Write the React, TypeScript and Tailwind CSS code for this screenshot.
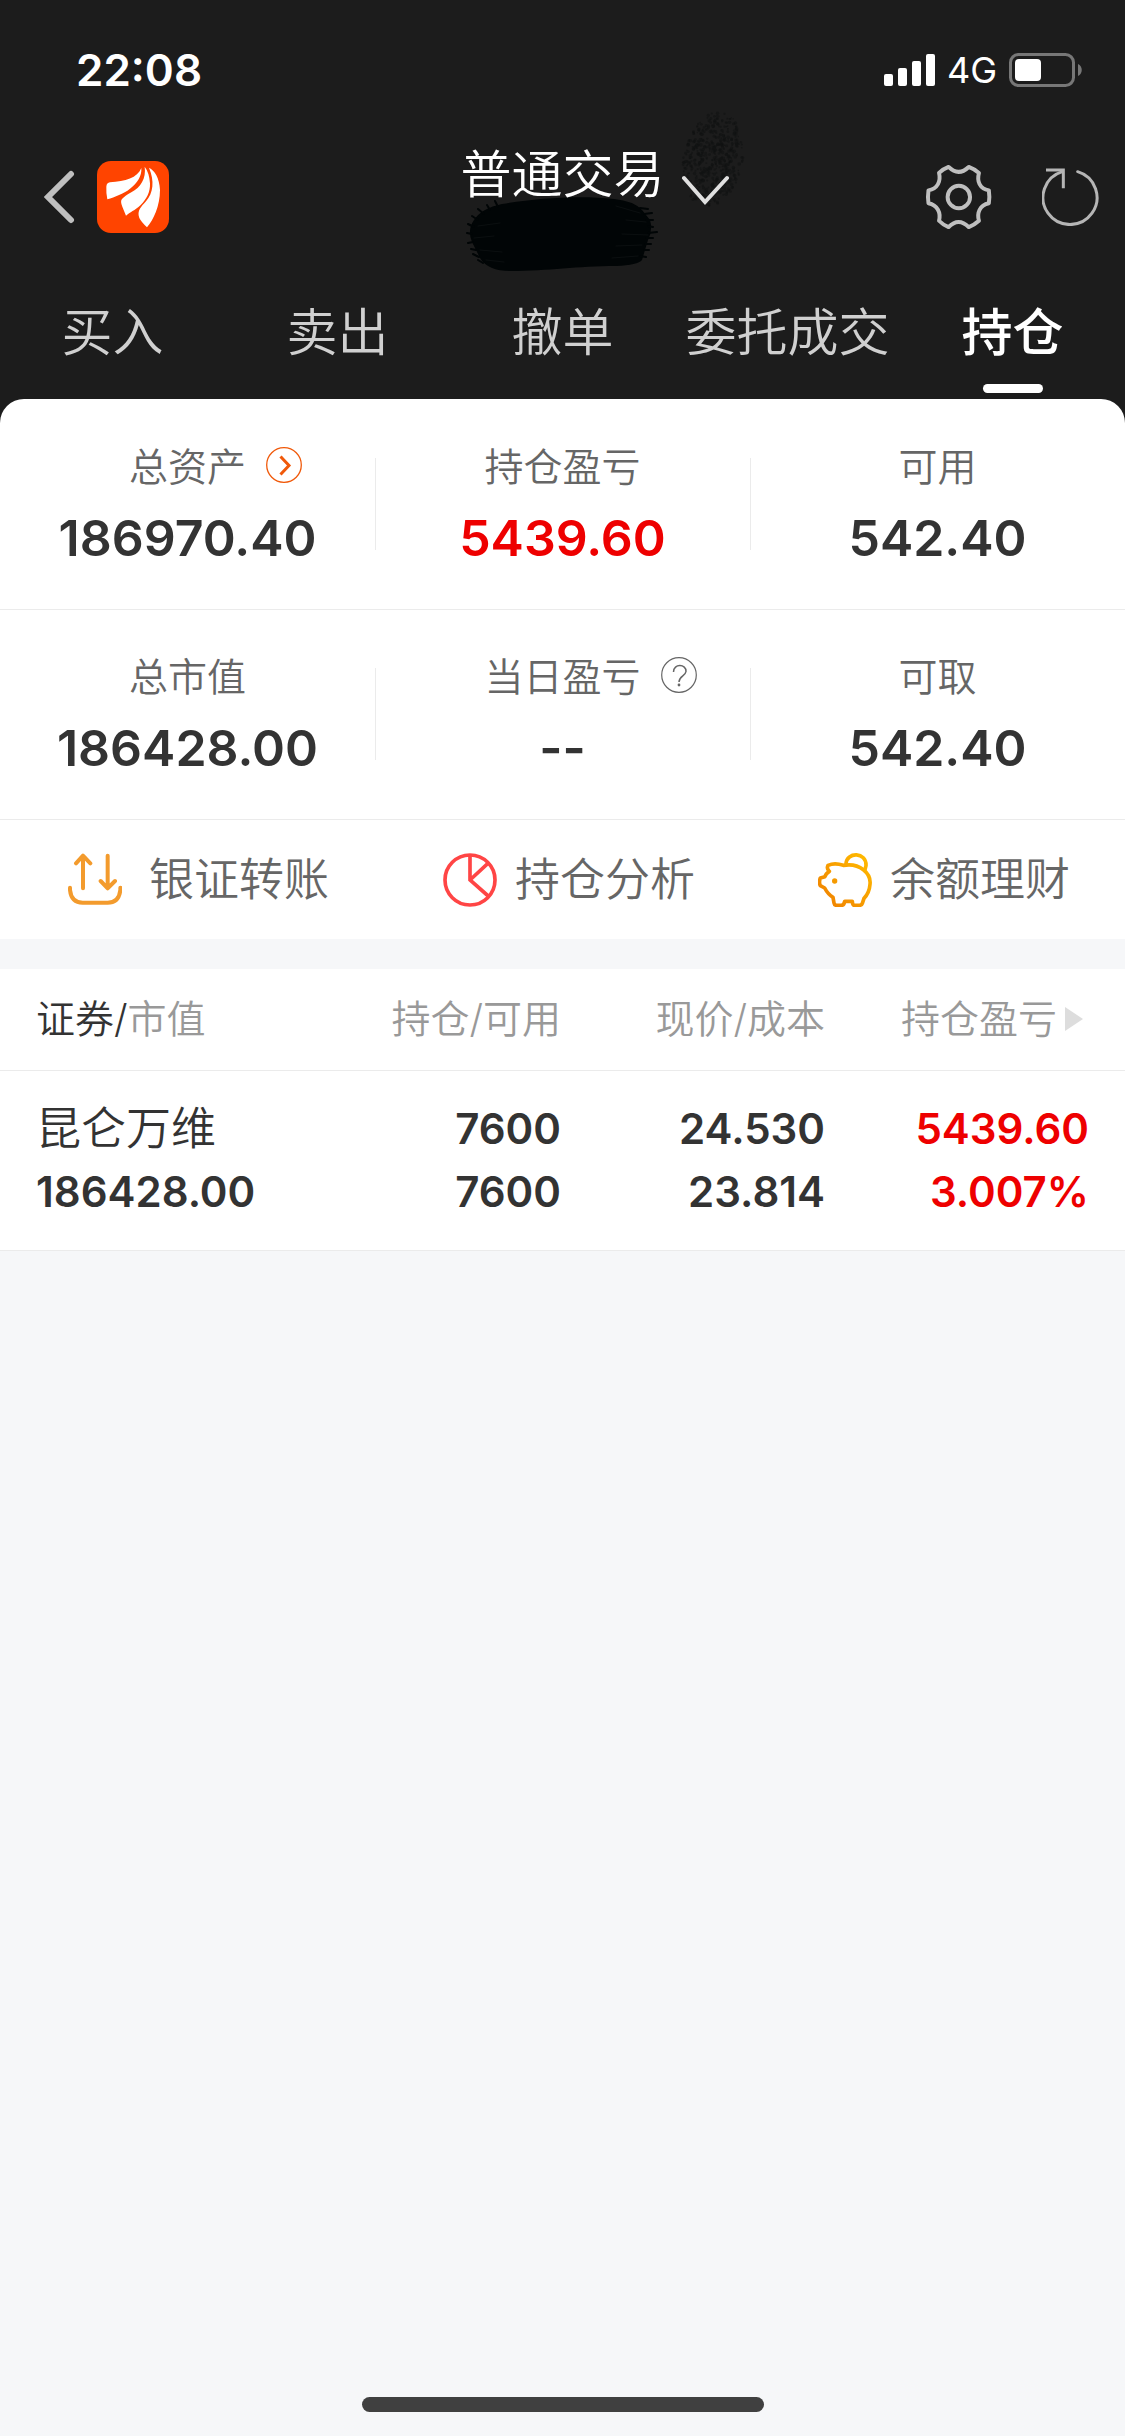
import { useState } from "react";
import type { ReactNode } from "react";

type Stat = {
  label: string;
  value: string;
  red?: boolean;
  icon?: ReactNode;
};

const TABS = ["买入", "卖出", "撤单", "委托成交", "持仓"];

const HOLDINGS = [
  {
    name: "昆仑万维",
    marketValue: "186428.00",
    position: "7600",
    available: "7600",
    price: "24.530",
    cost: "23.814",
    profit: "5439.60",
    rate: "3.007%",
  },
];

// seeded, so the spray looks the same on every render
function noise(n: number) {
  const v = Math.sin(n * 127.1 + 311.7) * 43758.5453;
  return v - Math.floor(v);
}

const SPECKS = Array.from({ length: 520 }, (_, i) => {
  const angle = noise(i) * Math.PI * 2;
  const spread = Math.pow(noise(i + 1000), 0.6);
  const y = Math.sin(angle) * spread * 47;
  return {
    x: 36 + Math.cos(angle) * spread * 30 - y * 0.12,
    y: 48 + y,
    r: 0.7 + noise(i + 2000) * 1.1,
  };
});

function SignalIcon() {
  return (
    <svg className="h-8 w-[51px]" viewBox="0 0 51 32" fill="#fff">
      <rect x="0" y="20" width="9" height="12" rx="2" />
      <rect x="14" y="14" width="9" height="18" rx="2" />
      <rect x="28" y="7" width="9" height="25" rx="2" />
      <rect x="42" y="0" width="9" height="32" rx="2" />
    </svg>
  );
}

function BatteryIcon() {
  return (
    <svg className="h-[34px] w-[74px]" viewBox="0 0 74 34">
      <rect x="1.5" y="1.5" width="63" height="31" rx="8" fill="none" stroke="#777" strokeWidth="3" />
      <rect x="6" y="6" width="26" height="22" rx="4" fill="#fff" />
      <path d="M69 11c5 2 5 10 0 12z" fill="#777" />
    </svg>
  );
}

function BackIcon() {
  return (
    <svg className="h-[54px] w-[31px]" viewBox="0 0 31 54" fill="none" stroke="#bfbfbf" strokeWidth="6">
      <path d="M27 4 4 27l23 23" strokeLinecap="round" strokeLinejoin="miter" />
    </svg>
  );
}

function Logo() {
  return (
    <svg className="size-[72px]" viewBox="201 63 216 216">
      <rect x="201" y="63" width="216" height="216" rx="42" fill="#ff4400" />
      <g fill="#fff">
        <path d="M334 84C322 114 286 124 240 127Q230 128 229 140Q228 158 232 178C255 170 280 162 300 146C322 129 336 108 334 84Z" />
        <path d="M344 80C349 115 332 142 304 157Q284 168 276 177Q270 183 277 200L288 227C300 216 314 212 332 195C350 178 361 156 360 130Q358 98 344 80Z" />
        <path d="M357 83C374 124 370 158 348 184C334 200 320 212 328 234Q334 246 351 262C370 240 390 198 390 150C388 112 374 92 357 83Z" />
      </g>
    </svg>
  );
}

function SettingsIcon() {
  return (
    <svg className="h-[66px] w-[67px]" viewBox="74 74 202 200" fill="none" stroke="#bfbfbf" strokeWidth="12">
      <path
        strokeLinejoin="round"
        d="M145 83Q175 113 206 83Q224 90 237 101C230 126 239 149 267 154Q270 174 267 193C239 199 230 222 237 246Q224 258 206 265Q175 234 145 265Q127 258 116 246C122 222 112 199 84 193Q81 174 84 154C112 149 122 126 116 101Q127 90 145 83Z"
      />
      <circle cx="176" cy="174" r="34" />
    </svg>
  );
}

function RefreshIcon() {
  return (
    <svg className="size-[58px]" viewBox="426 86 174 174" fill="none" stroke="#b5b5b5" strokeWidth="9">
      <path d="M533 97A81 81 0 1 1 487 97" strokeLinecap="round" />
      <path d="M438 92H490V147" />
    </svg>
  );
}

function TitleArrow() {
  return (
    <svg className="h-[30px] w-12" viewBox="0 0 48 30" fill="none" stroke="#e0e0e0" strokeWidth="4">
      <path d="M3 3l21 24L46 3" strokeLinecap="round" />
    </svg>
  );
}

function Spray() {
  return (
    <svg className="absolute -top-5 right-[-24px] h-[96px] w-[76px]" viewBox="0 0 76 96" fill="#101212">
      {SPECKS.map((s, i) => (
        <circle key={i} cx={s.x} cy={s.y} r={s.r} opacity="0.6" />
      ))}
    </svg>
  );
}

function BrushStroke() {
  return (
    <svg
      className="absolute left-1/2 top-[65px] h-[76px] w-48 -translate-x-1/2"
      viewBox="0 0 192 76"
      fill="none"
      strokeLinecap="round"
    >
      <path
        fill="#010506"
        d="M36 8C70 2 115-1 148 3Q168 5 176 14L184 24Q187 34 182 44L176 64Q172 69 150 70C110 70 84 75 44 75Q22 75 14 62L6 46Q1 34 8 24Q16 12 36 8Z"
      />
      <path
        stroke="#010506"
        strokeWidth="2"
        d="M24 14l-3-5M32 11l-3-6M18 18l-6-5M12 24l-6-4M8 31l-6-3M6 38l-5-1M7 46l-5 1M10 54l-5-1M13 61l-6-3M17 67l-5-3M174 12l8 1M178 18l8-1M180 24l7 0M182 30l5 1M182 37l9-1M180 42l7 0M179 48l6 0M178 54l5 0M174 60l6 1"
      />
      <path stroke="#0b0f10" strokeWidth="1" d="M12 30l22-3M8 42l20-2M14 54l22 2M20 64l18 2M150 10l24 7M160 24l20 2M156 38l26 1M150 50l26-1M146 62l26-2" />
    </svg>
  );
}

function MoreIcon() {
  return (
    <svg className="size-9" viewBox="0 0 36 36" fill="none" stroke="#f0590a">
      <circle cx="18" cy="18" r="17.3" strokeWidth="1.3" />
      <path d="M14.5 9.5l8.5 9-8.5 9" strokeWidth="3" />
    </svg>
  );
}

function HelpIcon() {
  return (
    <svg className="size-9" viewBox="0 0 36 36" fill="none" stroke="#666">
      <circle cx="18" cy="18" r="17.3" strokeWidth="1.2" />
      <path d="M12.5 15c0-9 13-8 12.5-.5C24.5 19 18 19 18 25" strokeWidth="1.5" />
      <circle cx="18" cy="28" r="1.4" fill="#666" stroke="none" />
    </svg>
  );
}

function TransferIcon() {
  return (
    <svg
      className="size-[54px]"
      viewBox="54 96 162 162"
      fill="none"
      stroke="#f39b2d"
      strokeWidth="12"
      strokeLinecap="round"
      strokeLinejoin="round"
    >
      <path d="M99 202V104M78 127l21-23 22 23M173 104v98M152 180l21 22 22-22M60 200v7q4 38 38 38h75q34 0 38-38v-7" />
    </svg>
  );
}

function PieIcon() {
  return (
    <svg className="size-[54px]" viewBox="69 96 162 162" fill="none" stroke="#ff4545" strokeWidth="11">
      <circle cx="150" cy="177" r="75" />
      <path d="M150 101v76l58 51M150 177l57-53" />
    </svg>
  );
}

function PiggyIcon() {
  return (
    <svg
      className="size-[54px]"
      viewBox="54 96 162 162"
      fill="none"
      stroke="url(#piggy)"
      strokeWidth="11"
      strokeLinejoin="round"
      strokeLinecap="round"
    >
      <defs>
        <linearGradient id="piggy" gradientUnits="userSpaceOnUse" x1="70" y1="240" x2="200" y2="110">
          <stop offset="0" stopColor="#f08300" />
          <stop offset="1" stopColor="#ffb900" />
        </linearGradient>
      </defs>
      <path d="M138 128C140 92 200 92 198 134L195 146" />
      <path d="M84 133Q104 124 130 133C180 124 214 158 210 190Q208 216 192 232L187 247Q185 253 178 253H162Q158 253 157 241H134Q132 253 124 253H110Q103 253 102 246L99 229Q84 220 74 201L61 194Q56 184 61 171L75 167Q77 158 88 151Q79 143 84 133Z" />
      <circle cx="104" cy="180" r="8" fill="#f59a00" stroke="none" />
    </svg>
  );
}

const STATS: Stat[][] = [
  [
    { label: "总资产", value: "186970.40", icon: <MoreIcon /> },
    { label: "持仓盈亏", value: "5439.60", red: true },
    { label: "可用", value: "542.40" },
  ],
  [
    { label: "总市值", value: "186428.00" },
    { label: "当日盈亏", value: "--", icon: <HelpIcon /> },
    { label: "可取", value: "542.40" },
  ],
];

export default function App() {
  const [activeTab, setActiveTab] = useState("持仓");

  return (
    <div className="flex min-h-screen flex-col bg-[#f6f7f9] font-['Inter','Noto_Sans_CJK_SC',sans-serif] text-[#333]">
      <div className="bg-[#1c1c1c]">
        {/* STATUS BAR */}
        <div className="flex h-[131px] items-center justify-between pl-[76px] pr-[42px] pt-2 text-white">
          <span className="text-[44px] font-semibold leading-[60px]">22:08</span>
          <div className="flex items-center">
            <SignalIcon />
            <span className="mx-3 text-[36px] leading-[60px]">4G</span>
            <BatteryIcon />
          </div>
        </div>

        {/* TOP BAR */}
        <header className="grid h-[132px] grid-cols-[1fr_auto_1fr] items-center">
          <div className="flex items-center gap-[22px] pl-11">
            <button type="button" aria-label="返回">
              <BackIcon />
            </button>
            <a href="#home" aria-label="首页">
              <Logo />
            </a>
          </div>
          <button type="button" className="relative flex h-full items-start gap-4 pl-16 pt-3.5 text-white">
            <Spray />
            <BrushStroke />
            <span className="relative text-[51px] font-[350] leading-[60px]">普通交易</span>
            <span className="relative pt-[30px]">
              <TitleArrow />
            </span>
          </button>
          <div className="flex items-center justify-end gap-[50px] pr-[25px]">
            <button type="button" aria-label="设置">
              <SettingsIcon />
            </button>
            <button type="button" aria-label="刷新">
              <RefreshIcon />
            </button>
          </div>
        </header>

        {/* TABS */}
        <nav className="grid h-[136px] grid-cols-5">
          {TABS.map((tab) => (
            <button
              key={tab}
              type="button"
              onClick={() => setActiveTab(tab)}
              className={`flex flex-col items-center justify-between whitespace-nowrap pb-1.5 pt-10 text-[51px] leading-[60px] ${
                activeTab === tab ? "font-medium text-white" : "font-[350] text-[#d0d0d0]"
              }`}
            >
              {tab}
              {activeTab === tab && <span className="h-[9px] w-[60px] rounded-full bg-white" />}
            </button>
          ))}
        </nav>

        {/* ASSETS */}
        <section className="rounded-t-3xl bg-white pt-px">
          {STATS.map((row, i) => (
            <div key={i} className="grid grid-cols-3 items-center border-b border-[#ebebeb] pb-[41px] pt-10">
              {row.map((stat) => (
                <div key={stat.label} className="relative">
                  <div className="grid grid-cols-[1fr_auto_1fr] items-start">
                    <span className="col-start-2 text-[39px] font-[350] leading-[54px] text-[#666]">{stat.label}</span>
                    {stat.icon && (
                      <button
                        type="button"
                        aria-label={`${stat.label}说明`}
                        className="ml-5 mt-[7px] justify-self-start"
                      >
                        {stat.icon}
                      </button>
                    )}
                  </div>
                  <div
                    className={`mt-3.5 text-center text-[50px] font-semibold leading-[60px] ${
                      stat.red ? "text-[#ee0000]" : "text-[#333]"
                    }`}
                  >
                    {stat.value}
                  </div>
                  <span className="absolute inset-y-[18px] -right-px w-px bg-[#ebebeb] [div:last-child>&]:hidden" />
                </div>
              ))}
            </div>
          ))}
        </section>
      </div>

      {/* SHORTCUTS */}
      <div className="grid h-[119px] grid-cols-3 bg-white text-[45px] font-[350] leading-[60px] text-[#666]">
        <button type="button" className="flex items-center gap-[27px] pl-[68px]">
          <TransferIcon />
          银证转账
        </button>
        <button type="button" className="flex items-center gap-[18px] pl-[68px]">
          <PieIcon />
          持仓分析
        </button>
        <button type="button" className="flex items-center gap-[18px] pl-[68px]">
          <PiggyIcon />
          余额理财
        </button>
      </div>

      {/* HOLDINGS */}
      <table className="mt-[30px] w-full table-fixed border-collapse bg-white">
        <colgroup>
          <col />
          <col className="w-[264px]" />
          <col className="w-[264px]" />
          <col className="w-[300px]" />
        </colgroup>
        <thead>
          <tr className="h-[101px] whitespace-nowrap border-b border-[#ebebeb] text-right text-[39px] leading-[54px] text-[#999]">
            <th className="pl-9 text-left font-[350]">
              <span className="text-[#333]">证券/</span>市值
            </th>
            <th className="font-[350]">持仓/可用</th>
            <th className="font-[350]">现价/成本</th>
            <th className="pr-[42px] font-[350]">
              <button type="button" className="inline-flex items-center gap-2">
                持仓盈亏
                <svg className="h-6 w-[18px]" viewBox="0 0 18 24" fill="#ddd">
                  <path d="M0 0l18 12L0 24z" />
                </svg>
              </button>
            </th>
          </tr>
        </thead>
        <tbody>
          {HOLDINGS.map((h) => (
            <tr
              key={h.name}
              className="h-[180px] border-b border-[#ebebeb] text-right text-[42px] font-semibold leading-[63px]"
            >
              <td className="pl-9 text-left">
                <div className="text-[45px] font-[350]">{h.name}</div>
                <div>{h.marketValue}</div>
              </td>
              <td>
                <div>{h.position}</div>
                <div>{h.available}</div>
              </td>
              <td>
                <div>{h.price}</div>
                <div>{h.cost}</div>
              </td>
              <td className="pr-9 text-[#ee0000]">
                <div>{h.profit}</div>
                <div>{h.rate}</div>
              </td>
            </tr>
          ))}
        </tbody>
      </table>

      <div className="mx-auto mb-6 mt-auto h-[15px] w-[402px] rounded-full bg-[#404040]" />
    </div>
  );
}
